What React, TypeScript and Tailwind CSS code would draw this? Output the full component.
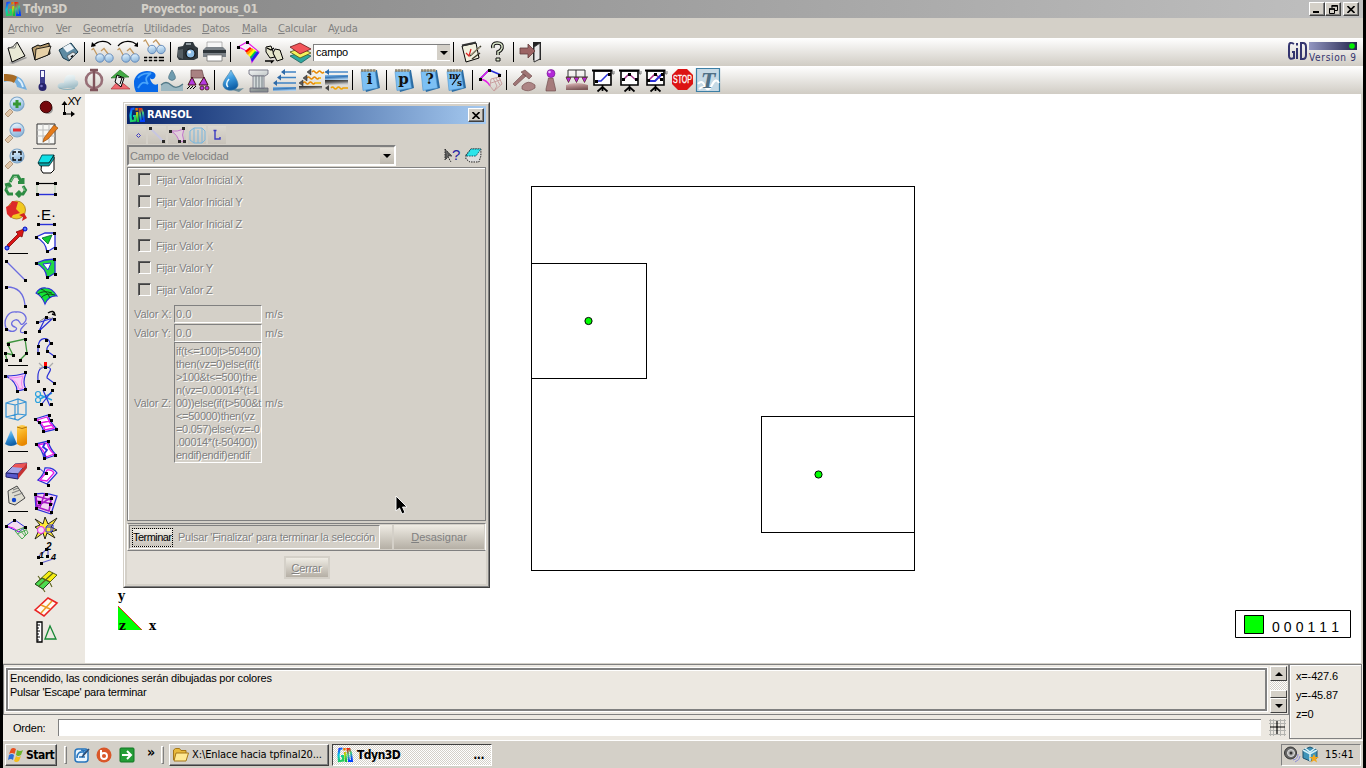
import React from "react";

type Shape = [d: string, fill?: string, stroke?: string, width?: number];
type IconDef = { s?: Shape[]; dots?: string; text?: React.ReactNode; w?: number };

const BL = "#2a30d8";
const MG = "#e61ae6";
const K = "#000";

const circle = (x: number, y: number, r: number) =>
  `M${x - r} ${y}a${r} ${r} 0 1 0 ${2 * r} 0a${r} ${r} 0 1 0 ${-2 * r} 0z`;

function Icon({ def, w = 26, h = 26 }: { def: IconDef; w?: number; h?: number }) {
  return (
    <svg width={w} height={h} viewBox={`0 0 ${w} ${h}`} className="block shrink-0 overflow-visible">
      {(def.s ?? []).map(([d, fill, stroke, width], i) => (
        <path key={i} d={d} fill={fill ?? "none"} stroke={stroke ?? "none"} strokeWidth={width ?? 1} />
      ))}
      {def.text}
      {def.dots && (
        <path
          shapeRendering="crispEdges"
          fill={K}
          d={def.dots
            .split(" ")
            .map((p) => {
              const [x, y] = p.split(",").map(Number);
              return `M${x - 1} ${y - 1}h3v3h-3z`;
            })
            .join("")}
        />
      )}
    </svg>
  );
}

const Sep = () => (
  <div className="flex h-6 w-2 shrink-0 items-center pl-[3px]">
    <div className="h-5 w-px bg-black" />
  </div>
);

const glasses = (dy: number): Shape[] => [
  [`M2.500 ${11 + dy}l2 -1.500l4 7M12 ${12 + dy}l3 -2.500l4.500 6`, "none", "#c39a62", 1.3],
  [circle(11, 19 + dy, 4.2), "url(#lens)", "#5d86b8", 0.9],
  [circle(20, 19 + dy, 4.2), "url(#lens)", "#5d86b8", 0.9],
];

const notebook = (t: string, size: number): IconDef => ({
  s: [
    ["M5 4L20 3L23 21L9 25L5 8z", "#2b6ca3"],
    ["M4 4.500L18 3.500L20.500 21L6 23.500z", "#7cc0f4", "#4d94cc", 0.6],
    ["M4 3.500H19", "none", "#b9a982", 2],
    ["M5 2v3M8 2v3M11 2v3M14 2v3M17 2v3", "none", "#6b6b6b", 1],
  ],
  text:
    t === "m/s" ? (
      <g fontFamily="DejaVu Serif" fontWeight="bold" fontSize="9" fill="#111">
        <text x="6" y="12">m</text>
        <text x="14" y="19">s</text>
        <path d="M9 18L17 7" stroke="#111" strokeWidth="1.200" />
      </g>
    ) : (
      <text x="12.500" y="17" textAnchor="middle" fontFamily="DejaVu Serif" fontWeight="bold" fontSize={size} fill="#111">{t}</text>
    ),
});

const board = (s: Shape[], dots: string): IconDef => ({
  s: [
    ["M5 4V18H22V4z", "#fff", K, 1.600],
    ["M3 3.500h20.500", "none", K, 2],
    ["M23.500 4v3h1.500v-3", "none", "#777", 1],
    ["M13.500 18v6M13.500 20l-5 4.500M13.500 20l5 4.500", "none", K, 1.700],
    ...s,
  ],
  dots,
});

const file: IconDef[] = [
  { s: [["M6 24L23 18L24 19L10 25z", "#999"], ["M5 9L10 8L14 3L22 17L9 23z", "#e9e9d6", K], ["M5 9l5-1l4-5l-2 6z", "#fafae8", "#555", 0.7]] },
  { s: [["M3 9L9 6L11 7L20 4L21 15L6 21z", "#b49a6c", K], ["M7 10L22 7L19 16L6 21z", "#e6d0a6", K, 0.8]] },
  { s: [["M4 11L16 4L23 13L14 22L8 19z", "#5e8ba3", "#16394c"], ["M8 8.500l7-4l4 5l-7 4z", "#eef4f8"], ["M12 17l6-4l3 2l-7 6z", "#dfe6ea", "#333", 0.6], ["M16 18l2-1.500", "none", K, 1.500]] },
];
const views: IconDef[] = [
  { s: [...glasses(0), ["M4 7C9 1 18 1 22 6", "none", K, 1.200], ["M2 8l1-5l4 4z", K]] },
  { s: [...glasses(0), ["M3 7C8 1 17 1 22 6", "none", K, 1.200], ["M23 8l0-5l-4 4z", K]] },
  { s: [...glasses(-8.500), ["M3 18.500h20M3 21.500h20", "none", K, 1.400], ["M7 17v6M12 17v6M17 17v6", "none", "#e4e1da", 1.500]] },
];
const media: IconDef[] = [
  { s: [["M3 8L8 7L10 3L18 3L20 7L23 9V19L19 21H4L2 18z", "#30383d"], ["M3 11v7l5 2V10z", "#555e63"], ["M11 4h5v2h-5z", "#8d979c"], [circle(15.500, 14.500, 4.500), "#8dbde5", "#111", 1.200], [circle(14.500, 13, 1.500), "#fff"]] },
  { s: [["M6 3h15v8H6z", "#f6f6f6", "#999", 0.7], ["M2 11L5 8H22L25 11V18H2z", "#7b8288"], ["M2 11h23v3H2z", "#2f363b"], ["M6 16h15v6H6z", "#fff", "#666", 0.7]] },
];
const render: IconDef[] = [
  { s: [["M3 8L12 3L24 13L17 23C16 14 10 10 3 8z", "#f7eef8", MG, 1.200], ["M15 8l2 2l-5 4l-2-2z", "red"], ["M17 9l2 2l-6 5l-2-2z", "#ff9a00"], ["M19 10l2 2l-6 6l-2-2z", "#ff0"], ["M20 12l2 1l-6 7l-1-2z", "#0c4"], ["M22 12l2 2l-7 9l-1-3z", "#22e"]], dots: "3,8 12,3" },
  { s: [["M5 8l5-1l4 11l-5 1l-4-6z", "#e6e6cc", K], ["M14 10l5 1l3 9l-6 2l-4-8z", "#e6e6cc", K], ["M6 9l4 2l3-2M4 22l8 0l-2 2", "none", K, 1.300]] },
  { s: [["M3 17L14 13L24 17L14 24z", "#2fa79f", "#1b5d59", 0.8], ["M3 13L14 9L24 14L13 19z", "#f2f25e", "#4f4f11", 0.8], ["M3 8L13 4L24 10L13 15z", "#f2555a", "#6b1515", 0.8]] },
];
const helpIcons: IconDef[] = [
  { s: [["M4 7L18 4L21 19L8 23z", "#f1f0df", K], ["M4 6.500L18 3.500", "none", "#333", 1.800], ["M8 14l3 3l2-7", "none", "#d22", 1.200], ["M12 17L23 7M14 20l8-6", "none", "#3c3c2c", 1.500], ["M13 16L22 8", "none", "#d8c8a0", 0.7]] },
  { s: [["M9 9Q8 4 13 4Q19 4 18 9Q17 12 14 13V16", "none", "#111", 3.600], ["M9 9Q8 4 13 4Q19 4 18 9Q17 12 14 13V16", "none", "#dce8cc", 1.500], ["M12 19h4v3h-4z", "#dce8cc", "#111"]] },
];
const exitIcon: IconDef = { s: [["M15 3H23V21H15z", "#222"], ["M16 8L22 4V20L16 23z", "#e7e7e7", "#333"], ["M2 9h8V5l7 7l-7 7v-4H2z", "#9c6464", "#623c3c", 0.8]] };

const flow: IconDef[] = [
  { s: [["M1 8C10 7 18 10 20 14C22 18 23 20 24 23L14 20C13 14 9 13 1 15z", "#74afdf"], ["M1 7C8 7 12 8 14 10L11 16C8 14 5 14 1 14z", "#a86b24"], ["M15 12q4 3 5 8", "none", "#dceffd", 1.800]] },
  { s: [["M11 3h5v15h-5z", "#3c3c8c"], ["M12 4h3v6h-3z", "#f4f4ff"], [circle(13.500, 20, 4), "#27236c"], [circle(12.500, 19, 1.300), "#7a78c8"]] },
  { s: [["M3 21C1 16 7 15 9 16C9 9 13 7 16 8C20 7 21 10 20 13C25 13 24 20 19 21z", "url(#cloud)"], ["M4 21q9 3 16 0", "none", "#8db1bc", 1.200]] },
  { s: [[circle(13, 13, 8), "none", "#987078", 2.600], ["M9 3h8M13 3v20M9 23h8", "none", "#80545c", 2.400]] },
  { s: [["M4 11L13 3L22 10z", "#43aa45", "#17641a", 0.6], ["M4 22L12 13L23 22z", "#ef6970", "#a3262b", 0.6], ["M10 8l7 3l-3 9l-6-5z", "#eee", K], ["M11 10l4 1l-2 6", "none", K]] },
  { s: [["M1 14C3 5 12 2 20 5C26 8 20 15 17 11C18 16 21 19 25 17V25H3C1 20 1 18 1 14z", "#0768e8"], ["M5 11C9 5 15 7 18 6C14 9 11 11 15 17C10 14 8 16 5 21", "none", "#4aa5fa", 1.800]] },
  { s: [["M13 3C16 8 17 10 16 12Q13 15 10 12C9 10 10 8 13 3z", "#6f9caf", "#4b7182", 0.7], ["M2 18Q7 13 12 18T24 17V24H2z", "#9cb8c2"], ["M2 18Q7 13 12 18T24 17", "none", "#527987", 1.200]] },
  { s: [["M6 3h11l2 8H6z", "#a98282", "#644", 0.7], ["M3 18L7 10L11 18zM14 18L19 10L23 18z", "#b43ce0", "#411"], [circle(17, 21, 2), "#b43ce0", "#411", 0.8], [circle(22, 21, 2), "#b43ce0", "#411", 0.8], ["M2 22l3-3M5 22l3-3M8 22l3-3", "none", K]] },
];
const wavy = "q1.500 -2 3 0t3 0t3 0t3 0";
const fluids: IconDef[] = [
  { s: [["M10 22q10 0 15-1l-5 4z", "#6b8d9c"], ["M12 3C15 9 19 13 19 18C18 25 5 25 4 18C4 13 9 9 12 3z", "url(#drop)", "#3a779e", 0.6], ["M10 12q-4 5-1 8", "none", "#e7f7ff", 1.500]] },
  { s: [["M4 3h19v4l-3 2H7L4 7zM5 21h18v4H5z", "url(#stone)", "#667", 0.8], ["M8 9h11v12H8z", "#d4dadb", "#667", 0.7], ["M11 9v12M14 9v12M17 9v12", "none", "#737d81", 1]] },
  { s: [["M13 5h12M9 10.500h16M5 16h20", "none", "#3f83c4", 1.400], ["M14 2v6l-4-3zM10 7.500v6l-4-3zM6 13v6l-4-3z", "#2e6aa8"], ["M2 20h23v4H2z", "url(#water)"]] },
  { s: [[`M15 5${wavy}M10 11${wavy}h2M6 16${wavy}h6`, "none", "#f0b400", 1.500], [`M15 5${wavy}M10 11${wavy}M6 16${wavy}`, "none", "#d33", 0.5], ["M14 2v6l-4-3zM10 8v6l-4-3zM6 13v6l-4-3z", "#5a5a5a", "#222", 0.5], ["M2 19h23v4H2z", "url(#slate)"]] },
  { s: [["M2 5h23", "none", "#3f83c4", 1.400], ["M6 2v6l-4-3z", "#2e6aa8"], ["M2 8h23v5H2z", "url(#water)"], ["M2 13h23v5H2z", "url(#slate)"], [`M8 21${wavy}h5`, "none", "#f0a000", 1.400], ["M6 18v6l-4-3z", "#444"]] },
];
const meshEdit: IconDef = { s: [["M3 12L12 3L24 8", "none", BL, 1.600], ["M3 12Q10 13 13 19", "none", MG, 1.400], ["M12 3l-9 9", "none", MG, 1.400], ["M14 12L22 10L25 17L17 24L13 19zM16 11l4 8l-3 5M19 11l4 7M14 16l9-3", "none", "#c9a0a0", 1]], dots: "3,12 12,3 22,8" };
const tools: IconDef[] = [
  { s: [["M10 5L14 3L21 9L18 12zM15 9L4 19L2 17L12 7z", "#9f7474", "#6c4848", 0.6], ["M11 19Q17 12 24 18V21Q17 26 11 22z", "#ad8585", "#795252", 0.7]] },
  { s: [["M11.500 11h4.500l2.500 11v2H9v-2z", "#a57b7b", "#664444", 0.6], [circle(14, 6.500, 4), "#b228d8", "#6a1681", 0.6], [circle(12.500, 5, 1.300), "#edbcff"]] },
  { s: [["M5 10V3H22V10M13 3v7M3 10h22", "none", "#333", 1], ["M3 10.500h5l-2.500 5zM11 10.500h5l-2.500 5zM19 10.500h5l-2.500 5z", "#b228d8", "#522", 0.7], ["M3 18Q14 14 25 18V23H3z", "url(#rose)"]] },
  board([["M7 14h5l7-7", "none", BL, 1.500]], "7,14 20,7"),
  board([["M7 13l6-6l7 6", "none", "#a53b8d", 1.500]], "7,12 13,7 20,12"),
  board([["M7 13l6-6l7 6", "none", "#b32c85", 1.500], ["M8 14h5l7-7", "none", BL, 2]], "6,13 13,7 20,7 19,12"),
  { s: [["M9 2h9l6 6v9l-6 6H9l-6-6V8z", "#dc1414"]], text: <text x="13.500" y="16.500" textAnchor="middle" textLength="19" lengthAdjust="spacingAndGlyphs" fontFamily="Liberation Sans" fontSize="10" stroke="#fff" strokeWidth="0.300" fill="#fff">STOP</text> },
  { s: [["M1.500 1.500h23v23h-23z", "#c6d9e5", "#3c7fa5", 1.200], ["M3 17q4-5 7 2t7-1t7-2M4 22q5-4 9 0", "none", "#fff", 2]], text: <text x="13" y="21" textAnchor="middle" fontFamily="Liberation Serif" fontStyle="italic" fontWeight="bold" fontSize="24" fill="#4f6f85">T</text> },
];

const mag = (s: Shape[]): IconDef => ({ s: [["M7 15L2 20L5 23L10 18z", "#e1c6a8", "#9c7e60", 0.7], [circle(14, 10, 7), "url(#lens)", "#7ea6c9", 1.200], ...s] });
const colA: (IconDef | null)[] = [
  mag([["M10 10h8M14 6v8", "none", "#369733", 3]]),
  mag([["M10 10h8", "none", "#e22f35", 3]]),
  mag([["M10 9V6h3M15 6h3v3M18 11v3h-3M13 14h-3v-3", "none", K, 1.300]]),
  { s: [["M7 10L10.500 4H15L18 9M20 6l0 4.500h-5M20 14L22.500 18L20 22H15M17 19l-3 3l3 3M5 13L3 18L5.500 22H10M2 13l4-1l2 3", "none", "#2d8c43", 3], ["M8 9L11 4.500H14M20 15l2 4M5 14l-1 4", "none", "#93ce9b", 0.8]] },
  { s: [[circle(13.500, 12, 9), "#f1c820", "#9b6d0c", 0.7], ["M3 9L7 7L9 3L15 4L13 11L17 15L10 17L8 20L4 16z", "#dd2929"], ["M16 17l5-2l3 5l-5 3l1-4z", "#d12222"]] },
  { s: [["M4 21L15 10L13 8L21 5L19 13L17 12L6 23z", "#d91515", "#7e0808", 0.8], [circle(22, 5, 2), "#4d7dff", "#00b"], [circle(4, 24, 2), "#4d7dff", "#00b"]] },
  null,
  { s: [["M4 4L22 22", "none", "#6c6ce0", 1.300]], dots: "3,3 22,22" },
  { s: [["M4 3Q20 3 22 21", "none", "#6c6ce0", 1.300]], dots: "3,3 22,22" },
  { s: [["M3 18C0 10 5 1 13 2C21 1 26 8 21 13C16 18 18 8 12 10C7 12 8 16 12 17C17 19 9 25 3 18M22 22Q16 24 18 19Q22 14 24 13", "none", "#6c6ce0", 1.300]], dots: "3,19 22,22" },
  { s: [["M4 7L22 3L24 17L17 24M4 7L10 19L2 17L4 24", "none", "#3d933d", 1.300]], dots: "5,8 22,3 23,17 17,24 10,19 2,17 3,24" },
  null,
  { s: [["M3 6Q14 6 23 3Q19 13 23 19L14 21Q14 12 3 6z", "#f7cff5", BL, 1.200], ["M6 8Q15 8 20 6Q17 14 20 18L16 19Q15 11 6 8z", "none", "#f08af0"]], dots: "2,6 22,2 22,19 14,21" },
  { s: [["M3 7L15 3L23 6V19L15 24L3 21zM3 7L12 9V24M12 9L23 6M15 3V18L3 21M15 18l8 1", "none", "#3794d5", 1.200]] },
  { s: [["M2 22L8 8L14 22Q8 26 2 22z", "url(#drop)"], ["M14 5Q19 1 24 5V22Q19 26 14 22z", "url(#gold)"], ["M14 5Q19 8 24 5", "none", "#b07307"]] },
  null,
  { s: [["M3 17L12 8L24 7L15 18z", "#a2a2e7", "#33337a"], ["M3 17L15 18V23L3 21z", "#5959ce", "#22226a"], ["M15 18L24 7V12L15 23z", "#c53232"], ["M12 8L24 7L20 12L9 11z", "#ed5454"]] },
  { s: [["M5 9L14 4L22 16L12 23L6 21z", "#dfddd1", "#454545"], ["M10 8l5-2M9 11l8-3M11 14l9-3", "none", "#808080", 1.200], [circle(11, 18, 2.200), "#14c"]] },
  null,
  { s: [["M3 10L12 4L22 11L16 16z", "#f3dcf0", BL], ["M3 10Q11 11 16 16", "none", MG], ["M12 15L22 11L25 17L19 23L12 15zM16 13l6 7M20 12l3 7M14 18l9-4", "none", "#4bab52"]], dots: "3,10 11,4 22,11" },
];

const surf = "M3 8Q13 8 22 4Q19 11 22 18L14 23Q12 13 3 8z";
const colB: (IconDef | null)[] = [
  { s: [[circle(15, 15, 5), "#999"], [circle(13, 13, 5.800), "#76090c", "#3f0606"]] },
  { s: [["M4 4h18v20H4z", "#f7f7f4", "#333"], ["M4 10h18M4 16h18M10 4v20M16 4v20", "none", "#bbb"], ["M11 18L21 5L25 8L15 19L10 22z", "#e57b1a", "#814109", 0.6]] },
  null,
  { s: [["M9 9L21 6V19L18 22H10L8 19z", "#fff", K], ["M9 4H21L16 12H5z", "#10dfe5", "#075e66"], ["M5 12h11l5-8v4l-5 7H7z", "#0aa6ac", K, 0.6]] },
  { s: [["M4 6.500h18", "none", K, 1.200], ["M4 8v10M22 8v10", "none", "#aac6aa"], ["M4 17.500h18", "none", BL, 1.400]], dots: "4,17 22,17 4,6 22,6" },
  { text: <text x="13" y="17" textAnchor="middle" fontFamily="Liberation Sans" fontSize="15" fill="#000">·E·</text>, s: [["M6 21.500h15", "none", BL, 1.400]], dots: "5,21 21,21" },
  { s: [["M3 8L12 4H22V18L14 23Q13 13 3 8z", "#fff", BL, 1.300], ["M9 9L19 6L15 15z", "#10ca30", "#063", 0.8]], dots: "3,8 21,4 22,19 14,22" },
  { s: [["M3 8L12 5L22 4V18L14 23Q13 13 3 8z", "#20d845", BL, 1.300], ["M10 9L18 8L15 15z", "#fff", BL]], dots: "3,8 21,4 22,19 14,22" },
  { s: [["M3 12Q7 6 13 7Q19 7 24 15Q16 14 12 23Q9 15 3 12z", "#15e338", BL, 1.100], ["M8 8Q14 10 17 17M5 13Q10 9 19 12M8 17Q13 11 22 14", "none", "#114b16"]] },
  { s: [["M4 16L20 11L6 24L13 10", "none", BL, 1.200], ["M4 16L13 10L20 12", "none", "#888"], ["M15 6q6-4 7 2l-3-1", "none", K, 1.500]], dots: "4,15 6,24 13,10 21,12" },
  { s: [["M5 21V14C6 3 16 4 17 10C17 13 13 12 14 18L21 23", "none", BL, 1.200]], dots: "5,13 13,7 18,10 14,18 21,23 5,20" },
  { s: [["M5 22C4 10 8 8 13 8C23 9 13 15 14 19L21 24", "none", BL, 1.200], ["M6 4l4 4M20 4l-4 4M6 9h4", "none", "#aaa", 1.200], ["M11 3h3v4h-3z", "red"]], dots: "5,22 12,8 21,24" },
  { s: [[circle(5, 9, 2.500), "none", "#28a0de", 1.200], [circle(5, 15, 2.500), "none", "#28a0de", 1.200], ["M7 10l12 5M7 14L19 8", "none", "#28a0de", 1.400], ["M10 5L17 21M19 6L8 20", "none", BL, 1.200]], dots: "11,4 19,5 8,19 18,19" },
  { s: [["M2 8L15 4Q18 13 24 18L11 21Q9 13 2 8z", "#fff", BL, 1.300], ["M4 9L14 6Q17 13 21 17L12 19Q10 13 4 9zM7 12l10-2M10 16l10-2", "none", MG, 1.300]], dots: "2,8 16,4 6,11 18,9 10,20 23,18" },
  { s: [["M3 7L15 4Q17 12 23 18L11 22Q10 13 3 7z", "#fff", BL, 1.300], ["M5 8l9-2Q16 13 21 17l-8 3Q11 13 5 8z", "none", MG, 1.300], ["M12 6l-2 4l4 3l-3 4l2 4", "none", BL, 1.800]], dots: "3,7 15,4 22,18 11,21" },
  { s: [["M5 17Q11 12 12 5Q20 4 24 10L14 21z", "#fff", BL, 1.300], ["M7 17Q12 12 14 7Q19 6 21 10L14 18z", "none", MG, 1.300], ["M5 4l8 7", "none", BL]], dots: "5,5 13,10 15,22" },
  { s: [["M2 5Q13 3 24 7L18 25L3 20z", "#f4d4f2", BL, 1.300], ["M3 7l15 4l-2 11l-12-4zM12 4l-5 14M4 12l16 3M3 18l16-10", "none", "#a719c6", 1.600]], dots: "2,5 13,5 18,9 6,13 3,19 18,23 17,15" },
  { s: [["M2 4L10 9L12 2L15 9L24 3L18 12L24 15L18 17L22 23L14 18L12 24L10 18L2 24L6 15L2 12L7 10z", "#ffe936", "#111", 0.9], [circle(8, 15, 3.500), "#f8d8f4", MG], ["M13 12h5v5h-5zM15 10h5v5M13 12l2-2M18 17l2-2", "none", BL]] },
  { s: [["M6 15L15 7L15 17M8 22L20 18", "none", "#6262d4", 1.200]], text: <><text x="13" y="9" fontFamily="Liberation Sans" fontStyle="italic" fontWeight="bold" fontSize="10">2</text><text x="6" y="17" fontFamily="Liberation Sans" fontStyle="italic" fontWeight="bold" fontSize="9">1</text><text x="18" y="19" fontFamily="Liberation Sans" fontStyle="italic" fontWeight="bold" fontSize="9">4</text></>, dots: "5,16 8,22 14,15 13,8" },
  { s: [["M2 17L16 4L24 8L10 22z", "#f5ed14", "#5b6710", 1], ["M2 17L9 11L17 15L10 22z", "#4cdb50", "#264b26"], ["M9 11L17 15M6 19L20 6M5 9l3 4M17 16l2 4M10 22l2 3", "none", "#59611b", 1.100]] },
  { s: [["M2 17L15 5L24 10L11 23z", "#fff9f2", "#e92222", 1.600], ["M8 12l9 4M8 20l11-12", "none", "#eb9b24", 1.500]] },
  { s: [["M4 3h5v20H4z", "#fff", K, 1.300], ["M4 6h3M4 9h2M4 12h3M4 15h2M4 18h3M4 21h2", "none", K], ["M12 20L17 7L23 20z", "none", "#178835", 1.300]] },
];

const Row = ({ icons, w = 26 }: { icons: IconDef[]; w?: number }) => (
  <>{icons.map((d, i) => <Icon key={i} def={d} w={w} />)}</>
);

function GidLogo({ w = 16 }: { w?: number }) {
  return (
    <svg width={w} height="16" viewBox="0 0 16 16" className="block shrink-0">
      <path d="M5.500 1.500L2.500 2L1.500 8L2 14L6 13.500V9H4" fill="none" stroke="url(#rain)" strokeWidth="2.200" />
      <path d="M7.500 1v2.500M8 5L9 15" fill="none" stroke="url(#rain2)" strokeWidth="2.400" />
      <path d="M10.500 2L12 14H15L14 6L12.500 2z" fill="none" stroke="url(#rain3)" strokeWidth="2" />
    </svg>
  );
}

const Defs = () => (
  <svg width="0" height="0" className="absolute">
    <defs>
      {([
        ["rain", "#2030ff", "#00c8e0", "#20d060"], ["rain2", "#f06000", "#c0e010", "#10c040"], ["rain3", "#f02010", "#40d080", "#0040ff"],
        ["lens", "#f4faff", "#bcd9f0", "#8fb6da"], ["cloud", "#f8fcfc", "#d8e6ea", "#a5c0c9"],
        ["drop", "#a8dcf8", "#3c9ce0", "#1060a8"], ["stone", "#f4f6f6", "#c2c8c8", "#889090"],
        ["water", "#8cc0ec", "#3878b8", "#b0d0ec"], ["slate", "#222", "#666", "#d0d0d0"],
        ["rose", "#e4c4c4", "#b08888", "#7c5858"], ["gold", "#ffd860", "#f8b020", "#e88800"],
      ] as const).map(([id, a, b, c]) => (
        <linearGradient key={id} id={id} x1="0" y1="0" x2="0.300" y2="1">
          <stop offset="0" stopColor={a} /><stop offset="0.500" stopColor={b} /><stop offset="1" stopColor={c} />
        </linearGradient>
      ))}
    </defs>
  </svg>
);

const capBtn = "flex h-[14px] w-4 items-center justify-center border border-t-white border-l-white border-r-[#404040] border-b-[#404040] bg-[#d4d0c8] shadow-[inset_-1px_-1px_0_#808080]";
const XGlyph = () => (
  <svg width="8" height="7" viewBox="0 0 8 7"><path d="M0.500 0L7.500 7M7.500 0L0.500 7" stroke="#000" strokeWidth="1.600" /></svg>
);
const Down = () => <svg width="8" height="4" viewBox="0 0 8 4" className="block"><path d="M0 0h8L4 4z" /></svg>;
const Up = () => <svg width="8" height="4" viewBox="0 0 8 4" className="block"><path d="M0 4h8L4 0z" /></svg>;

const emboss = "text-[#808080] [text-shadow:1px_1px_0_#fff]";
const menus: [string, string, string, string][] = [
  ["", "A", "rchivo", "w-12"], ["", "V", "er", "w-[27px]"], ["", "G", "eometría", "w-[61px]"], ["", "U", "tilidades", "w-[58px]"],
  ["", "D", "atos", "w-10"], ["", "M", "alla", "w-9"], ["", "C", "alcular", "w-[50px]"], ["A", "y", "uda", "w-10"],
];
const checks = ["Fijar Valor Inicial X", "Fijar Valor Inicial Y", "Fijar Valor Inicial Z", "Fijar Valor X", "Fijar Valor Y", "Fijar Valor Z"];
const formula = ["if(t<=100|t>50400)", "then(vz=0)else(if(t", ">100&t<=500)the", "n(vz=0.00014*(t-1", "00))else(if(t>500&t", "<=50000)then(vz", "=0.057)else(vz=-0", ".00014*(t-50400))", "endif)endif)endif"];
const field = "w-[88px] border border-t-[#808080] border-l-[#808080] border-r-white border-b-white pl-px";

const dlgTools: IconDef[] = [
  { s: [["M10.500 7.500l2 2l-2 2l-2-2z", "none", "#1818c0"]] },
  { s: [["M3 3L16 16", "none", "#c4c4e6", 2]], dots: "2,2 15,15" },
  { s: [["M3 5Q9 6 16 3Q13 9 16 15L11 16Q10 9 3 5z", "#e6cfe2", "#c060d0"]], dots: "2,5 15,2 11,15 16,15" },
  { s: [["M2 5L6 2h8l3 3v9l-3 3H6l-4-3zM6 2v15M10 4v13M14 2v15", "none", "#62b1e5"]] },
  { s: [["M7 4v9h5v-2M5.500 4.500h3", "none", "#1818c0", 1.400]] },
];

function Dialog() {
  return (
    <div className="absolute top-2 left-[38px] flex h-[486px] w-[367px] flex-col border border-t-[#d4d0c8] border-l-[#d4d0c8] border-r-[#404040] border-b-[#404040] bg-[#d4d0c8] text-[11px]">
      <div className="flex grow flex-col border border-t-white border-l-white border-r-[#808080] border-b-[#808080] p-0.5">
        <div className="flex h-[18px] shrink-0 items-center bg-linear-to-r from-[#0a246a] to-[#a6caf0] pr-0.5 pl-0.5">
          <GidLogo />
          <span className="ml-0.5 grow pt-px font-[DejaVu_Sans_Condensed] text-[11px] font-bold tracking-[-0.1px] text-white">RANSOL</span>
          <div className={capBtn}><XGlyph /></div>
        </div>
        <div className="flex h-[21px] shrink-0 items-center gap-0.5 pl-px">
          {dlgTools.map((d, i) => (
            <div key={i} className="h-[18px] w-[18px] bg-linear-to-b from-[#dedad2] to-[#c6c1b8] opacity-80"><Icon def={d} w={18} h={18} /></div>
          ))}
        </div>
        <div className="flex h-[21px] shrink-0 items-center">
          <div className="flex h-[21px] w-[270px] items-center border-2 border-t-[#808080] border-l-[#808080] border-r-white border-b-white pl-px text-[#808080]">
            <span className="grow pt-px tracking-[-0.17px]">Campo de Velocidad</span>
            <div className="flex h-4 w-3.5 items-center justify-center bg-linear-to-b from-[#e6e2da] to-[#bdb8ae] text-black"><Down /></div>
          </div>
          <svg width="44" height="18" viewBox="0 0 44 18" className="ml-[46px]">
            <path d="M3 2v11l3-3l3 5M3 2l7 7H6" fill="#555" stroke="#333" strokeDasharray="1.500 1" />
            <text x="10" y="13" fontFamily="Liberation Sans" fontSize="15" fill="#2323a5">?</text>
            <path d="M24 8L29 2H39V9L37 15H28L24 12z" fill="#ddd" stroke="#222" strokeDasharray="1.500 1" />
            <path d="M24 9L29 2H39L34 9z" fill="#2ce5ea" stroke="#156" strokeDasharray="1.500 1" />
          </svg>
        </div>
        <div className="mt-px flex h-[354px] shrink-0 flex-col border border-[#808080] shadow-[inset_1px_1px_0_#fff]">
          {checks.map((c) => (
            <div key={c} className="flex h-[22px] shrink-0 items-center pl-[10px]">
              <div className="h-[13px] w-[13px] border border-t-[#606060] border-l-[#606060] border-r-white border-b-white shadow-[inset_1px_1px_0_#404040]" />
              <span className={`ml-[5px] pt-0.5 tracking-[-0.2px] ${emboss}`}>{c}</span>
            </div>
          ))}
          <div className={`mt-[5px] grid grid-cols-[40px_88px_1fr] gap-x-[3px] gap-y-px pl-[3px] ${emboss}`}>
            {["X", "Y"].map((a) => (
              <React.Fragment key={a}>
                <span className="self-center pl-[3px] tracking-[-0.1px] whitespace-nowrap">Valor {a}:</span>
                <div className={`${field} h-[18px] leading-[17px] tracking-[0.2px]`}>0.0</div>
                <span className="self-center tracking-[0.2px]">m/s</span>
              </React.Fragment>
            ))}
            <span className="self-center pl-[3px] tracking-[-0.1px] whitespace-nowrap">Valor Z:</span>
            <div className={`${field} -mt-px h-[121px] pt-0.5 leading-[13px] tracking-[-0.3px] whitespace-pre`}>
              {formula.map((l) => <div key={l}>{l}</div>)}
            </div>
            <span className="self-center tracking-[0.2px]">m/s</span>
          </div>
        </div>
        <div className="mt-0.5 flex h-[28px] shrink-0 items-stretch border border-t-[#808080] border-l-white border-r-white border-b-[#808080] p-px">
          <div className="flex w-[251px] shrink-0 items-center border border-t-[#808080] border-l-[#808080] border-r-white border-b-white pl-0.5">
            <div className="flex h-[19px] w-[41px] shrink-0 items-center border border-dotted border-black bg-linear-to-b from-[#f1eee7] to-[#c9c4bb] pt-px text-black"><span className="tracking-[-0.55px] whitespace-nowrap">Terminar</span></div>
            <span className={`ml-[5px] pt-px tracking-[-0.27px] whitespace-nowrap ${emboss}`}>Pulsar 'Finalizar' para terminar la selección</span>
          </div>
          <div className="mr-0.5 w-3 bg-linear-to-b from-[#efece4] to-[#b5afa5]" />
          <div className="flex grow items-center justify-center bg-linear-to-b from-[#efece4] to-[#b5afa5] text-[#808080]"><span><u>D</u>esasignar</span></div>
        </div>
        <div className="flex grow items-center justify-center bg-[#e4e0d9]">
          <div className="flex h-[23px] w-[46px] items-center justify-center border-2 border-[#d4d0c8] bg-linear-to-b from-[#efece4] to-[#b5afa5]"><span className={`pt-px tracking-[-0.2px] ${emboss}`}><u>C</u>errar</span></div>
        </div>
      </div>
    </div>
  );
}

const Cursor = () => (
  <svg width="13" height="20" viewBox="0 0 13 20" className="absolute top-[401px] left-[310px]">
    <path d="M1 1V16L4.500 13L7 19L10 17.500L7.500 12H12z" fill="#000" stroke="#fff" strokeWidth="0.900" />
  </svg>
);

const ToolColumn = ({ icons, sep }: { icons: (IconDef | null)[]; sep: string }) => (
  <div className="flex flex-col">
    {icons.map((d, i) => d ? <Icon key={i} def={d} /> : <div key={i} className={sep} />)}
  </div>
);

const scrollBtn = "flex h-[15px] shrink-0 items-center justify-center border border-t-white border-l-white border-r-[#404040] border-b-[#404040] bg-[#d4d0c8]";
const hatch = "bg-[repeating-conic-gradient(#fff_0_25%,#d4d0c8_0_50%)] bg-[length:2px_2px]";
const Grip = ({ className }: { className: string }) => <div className={`h-[18px] w-[3px] border border-t-white border-l-white border-r-[#808080] border-b-[#808080] ${className}`} />;

export default function App() {
  return (
    <div className="flex h-[768px] w-[1366px] flex-col overflow-hidden border-x-[3px] border-black bg-[#d4d0c8] font-['Liberation_Sans',sans-serif] text-[11px] text-black">
      <Defs />
      <div className="flex h-[18px] shrink-0 items-center bg-linear-to-r from-[#828282] to-[#c0c0c0] pl-0.5 font-[DejaVu_Sans_Condensed] text-[12px] font-bold text-[#d4d0c8]">
        <GidLogo />
        <span className="ml-0.5 w-[118px] tracking-[-0.4px]">Tdyn3D</span>
        <span className="grow tracking-[-0.42px]">Proyecto: porous_01</span>
        <div className="mr-1 flex">
          <div className={capBtn}><div className="mt-1.5 mr-0.5 h-0.5 w-1.5 bg-black" /></div>
          <div className={capBtn}>
            <svg width="9" height="9" viewBox="0 0 9 9"><path d="M3 3V0.500h5.500v5H6" fill="none" stroke="#000" /><path d="M2.500 1h6M0 4h6" stroke="#000" strokeWidth="1.500" /><path d="M0.500 4h5v4.500h-5z" fill="none" stroke="#000" /></svg>
          </div>
          <div className={`${capBtn} ml-0.5`}><XGlyph /></div>
        </div>
      </div>
      <div className="flex h-5 shrink-0 items-center pt-0.5 pl-[5px] font-[DejaVu_Sans_Condensed] text-[11px] tracking-[-0.2px] text-[#808080]">
        {menus.map(([a, u, b, w]) => (
          <span key={b} className={`${w} whitespace-nowrap`}>{a}<u>{u}</u>{b}</span>
        ))}
      </div>
      <div className="flex h-7 shrink-0 items-center bg-linear-to-b from-white to-[#d0ccc4]">
        <Row icons={file} /><Sep /><Row icons={views} /><Sep /><Row icons={media} /><Sep /><Row icons={render} />
        <div className="flex h-[17px] w-[137px] items-center border-t border-l border-[#808080] bg-white pl-0.5">
          <span className="grow text-[11px] tracking-[-0.2px]">campo</span>
          <div className="flex h-[15px] w-[13px] items-center justify-center bg-[#d4d0c8]"><Down /></div>
        </div>
        <Sep /><Row icons={helpIcons} /><Sep /><Icon def={exitIcon} />
        <svg width="70" height="24" viewBox="0 0 70 24" className="mr-1.5 ml-auto">
          <path d="M7 4Q2 1 2 6v10q0 4 5 2v-6H5M10 8v11M10 3v2.500M14 3v16h2q3 0 3-4V7q0-4-3-4z" fill="none" stroke="#34356f" strokeWidth="2" />
          <linearGradient id="ver" x2="1"><stop stopColor="#9296c0" /><stop offset="1" stopColor="#23254c" /></linearGradient>
          <path d="M22 2h48v8H22z" fill="url(#ver)" /><circle cx="65" cy="6" r="2.800" fill="#00f000" />
          <text x="22" y="21" textLength="47" fontFamily="DejaVu Sans Condensed" fontSize="10" fill="#34356f">Version 9</text>
        </svg>
      </div>
      <div className="flex h-7 shrink-0 items-center bg-linear-to-b from-white to-[#d0ccc4]">
        <Row icons={flow} /><Sep /><Row icons={fluids} /><Sep /><Icon def={notebook("i", 15)} /><Sep />
        <Icon def={notebook("p", 15)} /><Icon def={notebook("?", 14)} /><Icon def={notebook("m/s", 9)} />
        <Sep /><Icon def={meshEdit} /><Sep /><Row icons={tools.slice(0, 3)} /><Row icons={tools.slice(3)} w={26.600} />
      </div>
      <div className="flex h-[569px] shrink-0">
        <div className="flex w-[82px] shrink-0 bg-[#ece8e1]">
          <div className="w-[30px]"><ToolColumn icons={colA} sep="mt-[3px] mb-1 ml-[5px] h-px w-5 bg-black" /></div>
          <ToolColumn icons={colB} sep="mt-[2px] mb-[2px] h-px w-6 bg-[#808080]" />
          <svg width="26" height="26" viewBox="0 0 26 26" className="block">
            <text x="8.500" y="11" fontFamily="Liberation Sans" fontSize="11.500" textLength="14">XY</text>
            <path d="M5.500 8v12h9" fill="none" stroke="#000" /><path d="M2.500 11l3-4l3 4zM12 17l4 3l-4 3zM4 18h3v3H4z" />
          </svg>
        </div>
        <div className="relative w-[1276px] bg-white">
          <svg width="1276" height="569" viewBox="85 94 1276 569" className="block">
            <g fill="none" stroke="#000" shapeRendering="crispEdges">
              <path d="M531.500 186.500h383v384h-383zM531.500 263.500h115v115h-115zM761.500 416.500h153v116h-153z" />
            </g>
            <circle cx="588.500" cy="321" r="3.600" fill="#0f0" stroke="#000" />
            <circle cx="818.500" cy="474.500" r="3.600" fill="#0f0" stroke="#000" />
            <path d="M118 606L142 630H118z" fill="#0f0" /><path d="M118 606L142 630" stroke="#e22" />
            <g fontFamily="DejaVu Serif" fontWeight="bold" fontSize="12">
              <text x="118" y="600">y</text><text x="119" y="630">z</text><text x="149" y="630">x</text>
            </g>
            <path d="M1235.500 610.500h115v27h-115z" fill="none" stroke="#000" />
            <path d="M1244.500 615.500h19v18h-19z" fill="#0f0" stroke="#000" />
            <text x="1272" y="632" fontFamily="Liberation Sans" fontSize="14" textLength="67">0 0 0 1 1 1</text>
          </svg>
          <Dialog />
          <Cursor />
        </div>
      </div>
      <div className="flex h-[77px] shrink-0 border-t border-[#d4d0c8] bg-[#ece8e1]">
        <div className="flex w-[1286px] flex-col">
          <div className="flex h-[51px] shrink-0 border border-[#808080] p-px pl-0.5">
            <div className="mt-0.5 mb-0.5 h-[43px] w-[1262px] border-2 border-[#808080] pt-px pl-0.5 leading-[14px] tracking-[-0.18px] shadow-[inset_1px_1px_0_#fff,0_0_0_1px_#fff]">
              <div>Encendido, las condiciones serán dibujadas por colores</div>
              <div className="tracking-[-0.25px]">Pulsar 'Escape' para terminar</div>
            </div>
            <div className={`ml-[3px] flex w-[17px] flex-col justify-between ${hatch}`}>
              <div className={scrollBtn}><Up /></div>
              <div className="mt-[9px] h-2 shrink-0 border border-t-white border-l-white border-r-[#404040] border-b-[#404040] bg-[#d4d0c8]" />
              <div className={scrollBtn}><Down /></div>
            </div>
          </div>
          <div className="flex grow items-center pl-2.5">
            <span className="w-[45px] pt-px tracking-[-0.2px]">Orden:</span>
            <div className="h-[17px] w-[1203px] border-t border-l border-[#808080] bg-white" />
            <svg width="17" height="17" viewBox="0 0 17 17" className="ml-2">
              <path d="M1.500 0v17M4.500 0v17M11.500 0v17M15.500 0v17M0 1.500h17M0 4.500h17M0 11.500h17M0 15.500h17" stroke="#b4b4b0" /><path d="M8 2v13M1 8h15" stroke="#000" strokeWidth="1.200" />
            </svg>
          </div>
        </div>
        <div className="flex h-[75px] w-[73px] flex-col border border-[#808080] pt-0.5 pl-[6px] leading-[19px] tracking-[-0.15px] shadow-[inset_1px_1px_0_#fff]">
          <span>x=-427.6</span><span>y=-45.87</span><span>z=0</span>
        </div>
      </div>
      <div className="flex h-[28px] shrink-0 items-center border-t border-white pl-0.5 font-[DejaVu_Sans_Condensed]">
        <div className="flex h-[22px] w-[52px] items-center border border-t-white border-l-white border-r-[#404040] border-b-[#404040] pl-0.5 shadow-[inset_-1px_-1px_0_#808080]">
          <svg width="16" height="16" viewBox="0 0 16 16">
            <path d="M3 2q2-2 5 0L6.500 7Q4 5 1 7z" fill="#e8501f" /><path d="M9 3q3 2 6 0L13 8q-3 2-5 0z" fill="#6eb52b" /><path d="M1 8q3-2 5 0L5 13q-2-2-5 0z" fill="#2c6ed6" /><path d="M8 9q2 2 5 0L11 14q-3 2-5 0z" fill="#f4bd1a" />
          </svg>
          <span className="ml-0.5 text-[12px] font-bold tracking-[-0.5px]">Start</span>
        </div>
        <Grip className="ml-[7px]" />
        <svg width="66" height="18" viewBox="0 0 66 18" className="ml-[6px]">
          <rect x="2" y="3" width="13" height="13" rx="3" fill="#eaf5fe" stroke="#2674bc" strokeWidth="1.500" /><path d="M4 12q0-7 7-6M8 4l5 1l-3 4M6 11h6" fill="none" stroke="#2674bc" strokeWidth="1.600" /><path d="M9 11l7-8" stroke="#2e4b70" strokeWidth="1.500" />
          <circle cx="31" cy="9" r="7.500" fill="#d9572a" /><path d="M28 4v6" stroke="#fff" strokeWidth="2" /><circle cx="31" cy="10" r="3" fill="none" stroke="#fff" strokeWidth="1.900" />
          <rect x="47" y="2" width="14" height="14" rx="1" fill="#239c36" stroke="#137622" /><path d="M49 9h9M54 5l4 4l-4 4" stroke="#fff" strokeWidth="2" fill="none" />
        </svg>
        <span className="ml-[8px] w-[12px] pb-[5px] text-[14px] leading-none font-bold">»</span>
        <Grip className="ml-0.5" />
        <div className="ml-[5px] flex h-[22px] w-[160px] items-center border border-t-white border-l-white border-r-[#404040] border-b-[#404040] pl-[3px] shadow-[inset_-1px_-1px_0_#808080]">
          <svg width="16" height="16" viewBox="0 0 16 16"><path d="M0.500 13V3l2-1.500h4l1.500 2h5V6" fill="#e8b93c" stroke="#a57718" /><path d="M1 14L3 6h12.500L13 14z" fill="#ffe993" stroke="#a57718" /></svg>
          <span className="ml-[3px] pt-px text-[11px] tracking-[-0.1px] whitespace-nowrap">X:\Enlace hacia tpfinal20...</span>
        </div>
        <div className={`ml-[3px] flex h-[22px] w-[160px] items-center border border-t-[#404040] border-l-[#404040] border-r-white border-b-white pl-1 ${hatch}`}>
          <GidLogo />
          <span className="ml-1 grow pt-px text-[12px] font-bold tracking-[-0.5px]">Tdyn3D</span>
          <span className="mr-[7px] text-[12px] font-bold tracking-[-0.5px]">...</span>
        </div>
        <div className="mr-0.5 ml-auto flex h-[22px] w-20 items-center border border-t-[#808080] border-l-[#808080] border-r-white border-b-white pl-0.5">
          <svg width="37" height="17" viewBox="0 0 37 17">
            <circle cx="6.500" cy="7" r="6" fill="#666" stroke="#333" /><circle cx="7" cy="7" r="3.500" fill="#aaa" stroke="#ddd" /><circle cx="7" cy="7" r="1.500" fill="#333" /><path d="M9 14q5-1 5-6M11 16q5-2 5-6" fill="none" stroke="#8b8bd8" />
            <path d="M19 4L26 1L33 4V12L26 15L19 12z" fill="#3f94b8" stroke="#1d516d" /><path d="M19 4l7 4l7-4M26 8v7M21 2l5 4l5-4" fill="none" stroke="#d8f2fa" strokeWidth="1.500" /><path d="M30 8l1.500 3h3.500l-3 2l1 3.500l-3-2l-3 2l1-3.500l-3-2h3.500z" fill="#f2a71e" />
          </svg>
          <span className="ml-1 pt-px text-[11px] tracking-[0.1px]">15:41</span>
        </div>
      </div>
    </div>
  );
}
